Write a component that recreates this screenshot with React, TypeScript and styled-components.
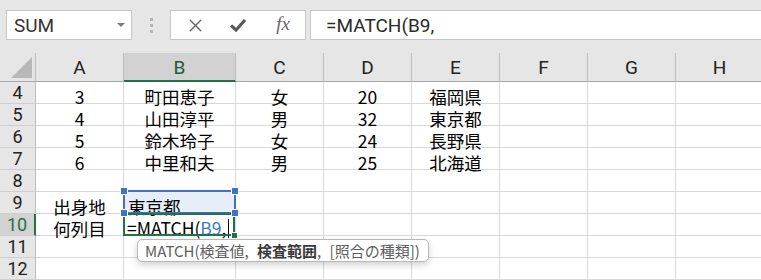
import React from 'react';
import styled, { createGlobalStyle, css } from 'styled-components';
import { X } from 'lucide-react';

const GlobalStyle = createGlobalStyle`
  html, body {
    margin: 0;
    padding: 0;
    background: #ffffff;
    overflow: hidden;
  }
  body {
    font-family: 'Noto Sans CJK JP', sans-serif;
  }
`;

const Window = styled.div`
  width: 761px;
  height: 280px;
  overflow: hidden;
  display: flex;
  flex-direction: column;
`;

const Toolbar = styled.div`
  display: flex;
  align-items: stretch;
  height: 58px;
  box-sizing: border-box;
  padding: 10px 0 13px 6px;
  background: #e6e6e6;
`;

const NameBox = styled.div`
  width: 126px;
  box-sizing: border-box;
  display: flex;
  align-items: center;
  padding-left: 7px;
  background: #fff;
  border: 1px solid #c6c6c6;
  font-family: Roboto, 'Liberation Sans', sans-serif;
  font-size: 19px;
  color: #333;
`;

const DropArrow = styled.span`
  margin-left: auto;
  margin-right: 6px;
  width: 0;
  height: 0;
  border-left: 4px solid transparent;
  border-right: 4px solid transparent;
  border-top: 4px solid #7a7a7a;
`;

const Grip = styled.div`
  width: 38px;
  display: flex;
  flex-direction: column;
  align-items: center;
  justify-content: center;
  gap: 3px;
`;

const GripDot = styled.span`
  width: 3px;
  height: 3px;
  background: #b4b4b4;
`;

const FxButtons = styled.div`
  width: 136px;
  box-sizing: border-box;
  display: grid;
  grid-template-columns: 48px 38px 48px;
  align-items: center;
  background: #fff;
  border: 1px solid #c6c6c6;
`;

const FxSlot = styled.div`
  display: flex;
  justify-content: center;
  align-items: center;
  color: #666;
`;

const FxText = styled.span`
  font-family: 'Liberation Serif', serif;
  font-style: italic;
  font-size: 19px;
  color: #666;
  margin-left: 4px;
  margin-top: -2px;
`;

const FormulaInput = styled.div`
  flex: 1;
  margin-left: 4px;
  margin-right: -2px;
  box-sizing: border-box;
  display: flex;
  align-items: center;
  padding-left: 15px;
  background: #fff;
  border: 1px solid #c6c6c6;
  font-family: Roboto, 'Liberation Sans', sans-serif;
  font-size: 19px;
  color: #2a2a2a;
`;

const Sheet = styled.div`
  position: relative;
  display: grid;
  grid-template-columns: 36px 88px 112px 88px 88px 88px 88px 88px 88px;
  grid-template-rows: 29px;
  grid-auto-rows: 22px;
`;

const Corner = styled.div`
  position: relative;
  background: #e6e6e6;
  border-right: 1px solid #bdbdbd;
  border-bottom: 1px solid #a8a8a8;
  box-sizing: border-box;
`;

const CornerTriangle = styled.span`
  position: absolute;
  right: 3px;
  bottom: 3px;
  width: 0;
  height: 0;
  border-left: 21px solid transparent;
  border-bottom: 21px solid #b8b8b8;
`;

const ColHeader = styled.div<{ $active?: boolean }>`
  box-sizing: border-box;
  display: flex;
  align-items: center;
  justify-content: center;
  padding-top: 1px;
  background: #e6e6e6;
  border-right: 1px solid #bdbdbd;
  border-bottom: 1px solid #a8a8a8;
  font-family: Roboto, 'Liberation Sans', sans-serif;
  font-size: 19px;
  color: #222;
  ${(p) =>
    p.$active &&
    css`
      background: #d2d2d2;
      border-bottom: 2px solid #217346;
      color: #1d5a38;
    `}
`;

const RowHeader = styled.div<{ $active?: boolean }>`
  box-sizing: border-box;
  display: flex;
  justify-content: center;
  align-items: flex-start;
  padding-top: 2px;
  line-height: 18px;
  background: #e6e6e6;
  border-right: 1px solid #bdbdbd;
  border-bottom: 1px solid #cfcfcf;
  font-family: Roboto, 'Liberation Sans', sans-serif;
  font-size: 18px;
  color: #222;
  ${(p) =>
    p.$active &&
    css`
      background: #d2d2d2;
      border-right: 2px solid #217346;
      color: #217346;
    `}
`;

type Sel = 'range' | 'edit' | undefined;

const Cell = styled.div<{ $align?: 'left' | 'center'; $sel?: Sel }>`
  position: relative;
  box-sizing: border-box;
  display: flex;
  align-items: flex-end;
  justify-content: ${(p) => (p.$align === 'left' ? 'flex-start' : 'center')};
  padding-left: ${(p) => (p.$align === 'left' ? '4px' : '0')};
  border-right: 1px solid #d8d8d8;
  border-bottom: 1px solid #d8d8d8;
  font-size: 17.5px;
  line-height: 12px;
  color: #000;
  white-space: nowrap;
  ${(p) =>
    p.$sel === 'range' &&
    css`
      background: #e8eef9;
      &::after {
        content: '';
        position: absolute;
        inset: -2px -1px -1px -1px;
        border: 2px solid #3f72c6;
        pointer-events: none;
      }
    `}
  ${(p) =>
    p.$sel === 'edit' &&
    css`
      z-index: 1;
      padding-left: 3px;
      &::after {
        content: '';
        position: absolute;
        inset: -1px 0 -1px -1px;
        border: 2px solid #217346;
        pointer-events: none;
      }
    `}
`;

const Handle = styled.span<{ $x: 'left' | 'right'; $y: 'top' | 'bottom' }>`
  position: absolute;
  ${(p) => (p.$y === 'top' ? 'top: -5px;' : 'bottom: -4px;')}
  ${(p) => (p.$x === 'left' ? 'left: -4px;' : 'right: -4px;')}
  width: 6px;
  height: 6px;
  background: #3f72c6;
  border: 1px solid #fff;
  z-index: 2;
`;

const FillHandle = styled.span`
  position: absolute;
  right: -3px;
  bottom: -4px;
  width: 5px;
  height: 5px;
  background: #217346;
  border: 1px solid #fff;
  z-index: 2;
`;

const Ref = styled.span`
  color: #3c78d8;
`;

const Caret = styled.span`
  position: relative;
  display: inline-block;
  width: 1px;
  height: 0;
  margin-left: 2px;
  &::after {
    content: '';
    position: absolute;
    left: 0;
    bottom: -3px;
    width: 1px;
    height: 19px;
    background: #000;
  }
`;

const Tooltip = styled.div`
  position: absolute;
  left: 137px;
  top: 186px;
  height: 23px;
  box-sizing: border-box;
  display: flex;
  align-items: center;
  padding: 0 8px 0 7px;
  background: #fff;
  border: 1px solid #b8b8b8;
  border-radius: 5px;
  box-shadow: 0 3px 7px rgba(0, 0, 0, 0.18);
  font-size: 15px;
  line-height: 18px;
  word-spacing: 5px;
  color: #5e5e5e;
  white-space: pre;
  z-index: 3;
`;

const Strong = styled.b`
  font-weight: 700;
  color: #3a3a3a;
`;

const columns = ['A', 'B', 'C', 'D', 'E', 'F', 'G', 'H'];

type CellData = { text?: React.ReactNode; align?: 'left' | 'center'; sel?: Sel };

const rows: { n: number; cells: CellData[] }[] = [
  { n: 4, cells: [{ text: '3' }, { text: '町田恵子' }, { text: '女' }, { text: '20' }, { text: '福岡県' }] },
  { n: 5, cells: [{ text: '4' }, { text: '山田淳平' }, { text: '男' }, { text: '32' }, { text: '東京都' }] },
  { n: 6, cells: [{ text: '5' }, { text: '鈴木玲子' }, { text: '女' }, { text: '24' }, { text: '長野県' }] },
  { n: 7, cells: [{ text: '6' }, { text: '中里和夫' }, { text: '男' }, { text: '25' }, { text: '北海道' }] },
  { n: 8, cells: [] },
  { n: 9, cells: [{ text: '出身地' }, { text: '東京都', align: 'left', sel: 'range' }] },
  {
    n: 10,
    cells: [
      { text: '何列目' },
      {
        text: (
          <span>
            =MATCH(<Ref>B9</Ref>,<Caret />
          </span>
        ),
        align: 'left',
        sel: 'edit',
      },
    ],
  },
  { n: 11, cells: [] },
  { n: 12, cells: [] },
];

function CheckIcon() {
  return (
    <svg width="20" height="16" viewBox="0 0 20 16">
      <path d="M3 8.5 L8 13 L17 3" fill="none" stroke="#5a5a5a" strokeWidth="3.2" />
    </svg>
  );
}

export default function App() {
  return (
    <Window>
      <GlobalStyle />
      <Toolbar>
        <NameBox>
          SUM
          <DropArrow />
        </NameBox>
        <Grip>
          <GripDot />
          <GripDot />
          <GripDot />
        </Grip>
        <FxButtons>
          <FxSlot>
            <X size={21} strokeWidth={1.6} />
          </FxSlot>
          <FxSlot>
            <CheckIcon />
          </FxSlot>
          <FxSlot>
            <FxText>fx</FxText>
          </FxSlot>
        </FxButtons>
        <FormulaInput>=MATCH(B9,</FormulaInput>
      </Toolbar>
      <Sheet>
        <Corner>
          <CornerTriangle />
        </Corner>
        {columns.map((c) => (
          <ColHeader key={c} $active={c === 'B'}>
            {c}
          </ColHeader>
        ))}
        {rows.map((r) => (
          <React.Fragment key={r.n}>
            <RowHeader $active={r.n === 10}>{r.n}</RowHeader>
            {columns.map((c, i) => {
              const d = r.cells[i] || {};
              return (
                <Cell key={c} $align={d.align} $sel={d.sel}>
                  {d.text}
                  {d.sel === 'range' && (
                    <>
                      <Handle $x="left" $y="top" />
                      <Handle $x="right" $y="top" />
                      <Handle $x="left" $y="bottom" />
                      <Handle $x="right" $y="bottom" />
                    </>
                  )}
                  {d.sel === 'edit' && <FillHandle />}
                </Cell>
              );
            })}
          </React.Fragment>
        ))}
        <Tooltip>
          MATCH(検査値, <Strong>検査範囲</Strong>, [照合の種類])
        </Tooltip>
      </Sheet>
    </Window>
  );
}
